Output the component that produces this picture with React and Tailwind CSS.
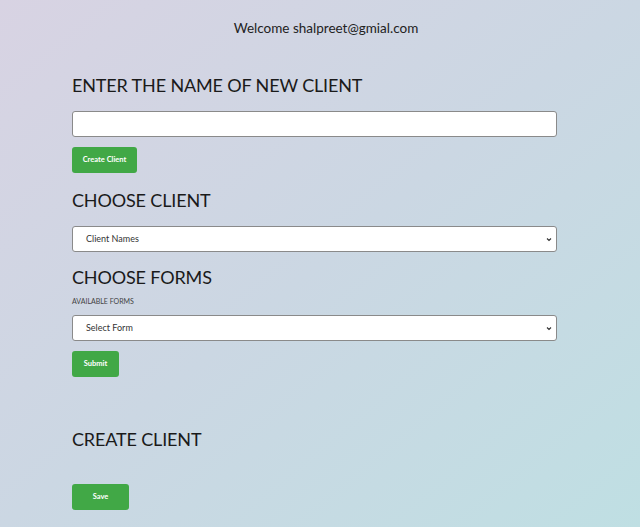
import React from 'react';

export default function App() {
  return (
    <div
      className="min-h-[527px] w-full bg-gradient-to-br from-[#d8d3e3] via-[#cbd7e3] to-[#bfdfe3] text-[#1a1a1a]"
      style={{ fontFamily: 'Lato, "Open Sans", sans-serif' }}
    >
      {/* Header */}
      <div className="pt-[19px] pl-[12px] text-center text-[13.5px] leading-[18px] text-[#222]">
        Welcome shalpreet@gmial.com
      </div>

      <div className="mx-[72px] mt-[38px] w-[485px] flex flex-col">
        <h1 className="text-[18px] leading-[20px] font-normal tracking-[-0.15px]">ENTER THE NAME OF NEW CLIENT</h1>
        <input
          type="text"
          className="mt-[16px] h-[26px] w-full rounded-[3px] border border-[#8a8a8a] bg-white px-2 text-[9px]"
        />
        <button className="mt-[10px] h-[26px] w-[65px] rounded-[3px] bg-[#41a846] text-[7.5px] font-bold text-white">
          Create Client
        </button>

        <h2 className="mt-[17px] text-[18px] leading-[20px] font-normal tracking-[-0.15px]">CHOOSE CLIENT</h2>
        <div className="mt-[16px] relative h-[26px] w-full rounded-[3px] border border-[#8a8a8a] bg-white flex items-center">
          <span className="pl-[13px] text-[9px] text-[#333]">Client Names</span>
          <svg className="absolute right-[4px] top-[10px]" width="6" height="5" viewBox="0 0 6 5">
            <path d="M1 1.5 L3 3.5 L5 1.5" fill="none" stroke="#333" strokeWidth="1.1" />
          </svg>
        </div>

        <h2 className="mt-[15px] text-[18px] leading-[20px] font-normal tracking-[-0.15px]">CHOOSE FORMS</h2>
        <div className="mt-[9px] text-[7px] leading-[10px] text-[#444]">AVAILABLE FORMS</div>
        <div className="mt-[9px] relative h-[26px] w-full rounded-[3px] border border-[#8a8a8a] bg-white flex items-center">
          <span className="pl-[13px] text-[9px] text-[#333]">Select Form</span>
          <svg className="absolute right-[4px] top-[10px]" width="6" height="5" viewBox="0 0 6 5">
            <path d="M1 1.5 L3 3.5 L5 1.5" fill="none" stroke="#333" strokeWidth="1.1" />
          </svg>
        </div>
        <button className="mt-[10px] h-[26px] w-[47px] rounded-[3px] bg-[#41a846] text-[7.5px] font-bold text-white">
          Submit
        </button>

        <h2 className="mt-[52px] text-[18px] leading-[20px] font-normal tracking-[-0.15px]">CREATE CLIENT</h2>
        <button className="mt-[35px] h-[26px] w-[57px] rounded-[3px] bg-[#41a846] text-[7.5px] font-bold text-white">
          Save
        </button>
      </div>
    </div>
  );
}
